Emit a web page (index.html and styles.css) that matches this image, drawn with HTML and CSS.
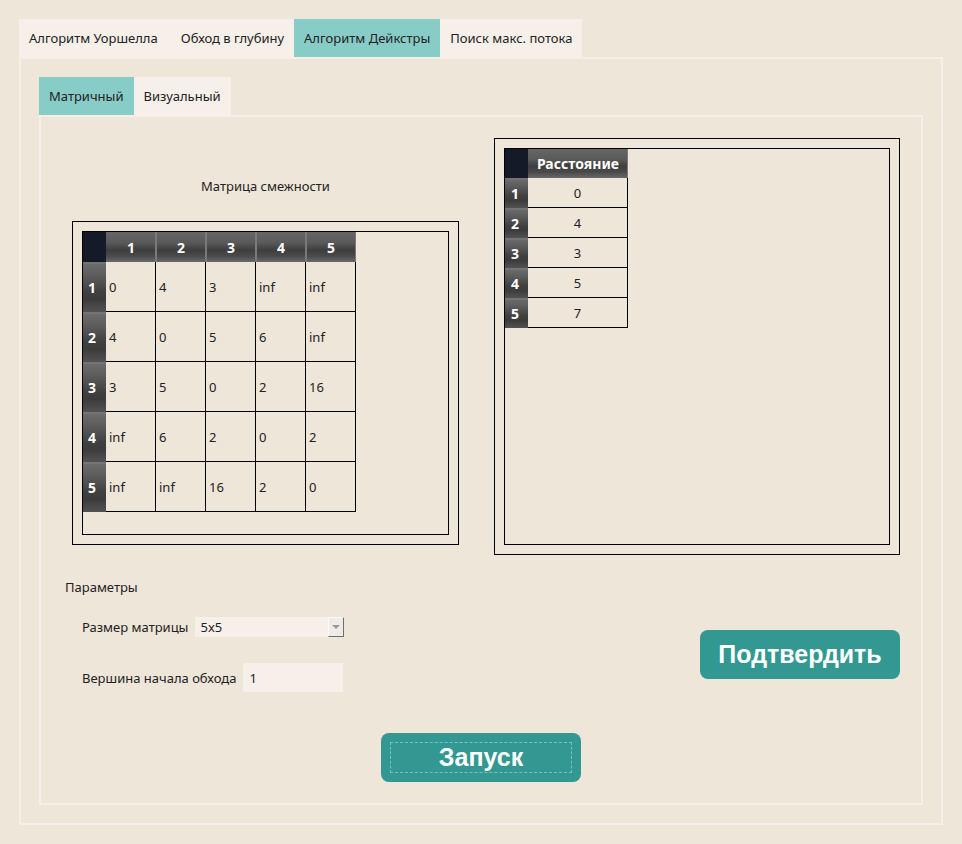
FILE: index.html
```html
<!DOCTYPE html>
<html lang="ru">
<head>
<meta charset="utf-8">
<title>Алгоритм Дейкстры</title>
<link rel="stylesheet" href="styles.css">
</head>
<body>
<div class="app">
  <div class="tabs">
    <div class="tab tab-first">Алгоритм Уоршелла</div>
    <div class="tab">Обход в глубину</div>
    <div class="tab active">Алгоритм Дейкстры</div>
    <div class="tab">Поиск макс. потока</div>
  </div>
  <div class="pane">
    <div class="tabs">
      <div class="tab active">Матричный</div>
      <div class="tab">Визуальный</div>
    </div>
    <div class="subpane">
      <div class="top">
        <div class="matrix-col">
          <div class="caption">Матрица смежности</div>
          <div class="frame frame-matrix">
            <div class="frame-in">
              <div class="grid grid-matrix">
                <div class="corner"></div>
                <div class="hh">1</div><div class="hh">2</div><div class="hh">3</div><div class="hh">4</div><div class="hh">5</div>
                <div class="rh">1</div><div class="cell">0</div><div class="cell">4</div><div class="cell">3</div><div class="cell">inf</div><div class="cell">inf</div>
                <div class="rh">2</div><div class="cell">4</div><div class="cell">0</div><div class="cell">5</div><div class="cell">6</div><div class="cell">inf</div>
                <div class="rh">3</div><div class="cell">3</div><div class="cell">5</div><div class="cell">0</div><div class="cell">2</div><div class="cell">16</div>
                <div class="rh">4</div><div class="cell">inf</div><div class="cell">6</div><div class="cell">2</div><div class="cell">0</div><div class="cell">2</div>
                <div class="rh">5</div><div class="cell">inf</div><div class="cell">inf</div><div class="cell">16</div><div class="cell">2</div><div class="cell">0</div>
              </div>
            </div>
          </div>
        </div>
        <div class="frame frame-result">
          <div class="frame-in">
            <div class="grid grid-result">
              <div class="corner"></div>
              <div class="hh">Расстояние</div>
              <div class="rh">1</div><div class="cell">0</div>
              <div class="rh">2</div><div class="cell">4</div>
              <div class="rh">3</div><div class="cell">3</div>
              <div class="rh">4</div><div class="cell">5</div>
              <div class="rh">5</div><div class="cell">7</div>
            </div>
          </div>
        </div>
      </div>
      <div class="bottom">
        <div class="params">
          <div class="params-title">Параметры</div>
          <div class="field field-size">
            <span class="label">Размер матрицы</span>
            <div class="combo">
              <span class="combo-text">5x5</span>
              <span class="combo-btn"><span class="arrow"></span></span>
            </div>
          </div>
          <div class="field field-start">
            <span class="label">Вершина начала обхода</span>
            <div class="input">1</div>
          </div>
        </div>
        <button class="btn confirm">Подтвердить</button>
      </div>
      <div class="run-row">
        <button class="btn run">Запуск</button>
      </div>
    </div>
  </div>
</div>
</body>
</html>
```
FILE: styles.css
```css
* { box-sizing: border-box; }

body {
  margin: 0;
  background: #efe6da;
  font-family: "Noto Sans", sans-serif;
  font-size: 13px;
  color: #222;
}

.app { padding: 19px; }

.tabs { display: flex; height: 38px; }

.tab {
  display: flex;
  align-items: center;
  padding: 0 10px;
  background: #f7f0ea;
  white-space: nowrap;
}

.tab-first { padding-right: 13px; }

.tab.active { background: #88ccc8; }

.pane {
  height: 768px;
  border: 2px solid #f7eee7;
  padding: 18px;
}

.subpane {
  height: 690px;
  border: 2px solid #f7eee7;
}

.top {
  display: flex;
  align-items: flex-start;
  gap: 35px;
  padding: 21px 0 0 31px;
}

.matrix-col { width: 387px; padding-top: 40px; }

.caption { text-align: center; line-height: 17px; height: 17px; }

.frame { border: 1px solid #000; padding: 9px; }

.frame-matrix { margin-top: 26px; height: 324px; }

.frame-result { width: 406px; height: 417px; }

.frame-in { border: 1px solid #000; height: 100%; }

.grid { display: grid; }

.grid-matrix {
  grid-template-columns: 23px repeat(5, 50px);
  grid-template-rows: 30px repeat(5, 50px);
}

.grid-result {
  grid-template-columns: 23px 100px;
  grid-template-rows: 29px repeat(5, 30px);
}

.corner { background: #151a28; }

.hh {
  display: flex;
  align-items: center;
  justify-content: center;
  color: #fff;
  font-weight: bold;
  font-size: 14px;
  background: linear-gradient(to bottom, #666666 0%, #5a5a5a 35%, #3e3e3e 60%, #4a4a4a 80%, #6a6a6a 100%);
  box-shadow: inset -1px 0 #7a7a7a;
}

.hh + .hh { box-shadow: inset 1px 0 #7a7a7a, inset -1px 0 #7a7a7a; }

.rh {
  display: flex;
  align-items: center;
  padding-left: 5px;
  color: #fff;
  font-weight: bold;
  font-size: 14px;
  background: linear-gradient(to bottom, #6e6e6e 0%, #5e5e5e 25%, #404040 60%, #3c3c3c 75%, #525252 100%);
  box-shadow: inset 0 2px #747474;
}

.grid-result .rh { padding-left: 6px; }

.cell {
  display: flex;
  align-items: center;
  padding-left: 3px;
  border-right: 1px solid #000;
  border-bottom: 1px solid #000;
}

.grid-result .cell { justify-content: center; padding-left: 0; }

.bottom {
  display: flex;
  align-items: flex-start;
  margin-top: 23px;
  padding: 0 21px 0 24px;
}

.params-title { line-height: 18px; }

.field { display: flex; align-items: center; margin-left: 17px; }

.field-size { margin-top: 21px; }

.field-start { margin-top: 26px; }

.combo {
  display: flex;
  align-items: center;
  justify-content: space-between;
  margin-left: 7px;
  width: 149px;
  height: 20px;
  background: #f7f0ea;
  padding-left: 5px;
}

.combo-btn {
  display: flex;
  align-items: center;
  justify-content: center;
  width: 16px;
  height: 20px;
  background: #efebe6;
  border-top: 1px solid #fbfaf8;
  border-left: 1px solid #fbfaf8;
  border-right: 1px solid #6e6e6e;
  border-bottom: 1px solid #6e6e6e;
}

.arrow {
  width: 0;
  height: 0;
  border-left: 4px solid transparent;
  border-right: 4px solid transparent;
  border-top: 4px solid #9a9a9a;
}

.input {
  display: flex;
  align-items: center;
  margin-left: 7px;
  width: 100px;
  height: 29px;
  padding-left: 6px;
  background: #f7efe9;
}

.btn {
  width: 200px;
  height: 49px;
  padding: 0;
  border: none;
  border-radius: 8px;
  background: #329891;
  color: #fff;
  font: bold 25px "Liberation Sans", Arial, sans-serif;
}

.confirm { margin-left: auto; margin-top: 52px; }

.run-row { display: flex; justify-content: center; margin-top: 41px; }

.run { outline: 1px dashed #79c1ba; outline-offset: -10px; }
```
